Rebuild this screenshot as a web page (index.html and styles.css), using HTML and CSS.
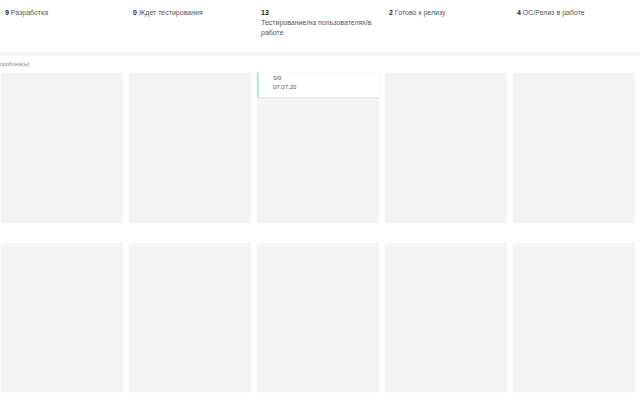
FILE: index.html
```html
<!DOCTYPE html>
<html lang="ru">
<head>
<meta charset="utf-8">
<link rel="stylesheet" href="styles.css">
</head>
<body>
<div class="board">
  <div class="head">
    <div class="hcol"><b>9</b> Разработка</div>
    <div class="hcol"><b>0</b> Ждет тестирования</div>
    <div class="hcol"><b>13</b><br>Тестирование/на пользователях/в работе</div>
    <div class="hcol"><b>2</b> Готово к релизу</div>
    <div class="hcol"><b>4</b> ОС/Релиз в работе</div>
  </div>
  <div class="band"></div>
  <div class="label">проблем(ы)</div>
  <div class="rows">
    <div class="row">
      <div class="cell"></div>
      <div class="cell"></div>
      <div class="cell">
        <div class="card">
          <div>3/0</div>
          <div>07.07.20</div>
        </div>
      </div>
      <div class="cell"></div>
      <div class="cell"></div>
    </div>
    <div class="row">
      <div class="cell"></div>
      <div class="cell"></div>
      <div class="cell"></div>
      <div class="cell"></div>
      <div class="cell"></div>
    </div>
  </div>
</div>
</body>
</html>
```
FILE: styles.css
```css
html, body {
  margin: 0;
  padding: 0;
  background: #ffffff;
}
body {
  font-family: "Liberation Sans", Arial, sans-serif;
  color: #333;
  width: 640px;
  height: 400px;
  overflow: hidden;
}
.head {
  display: grid;
  grid-template-columns: repeat(5, 128px);
  height: 52px;
  box-sizing: border-box;
  padding-top: 8px;
}
.hcol {
  padding-left: 5px;
  padding-right: 8px;
  font-size: 7px;
  line-height: 10px;
  color: #555;
}
.hcol b {
  color: #222;
}
.band {
  height: 4px;
  background: #f4f4f4;
}
.label {
  height: 17px;
  box-sizing: border-box;
  padding-top: 5px;
  font-size: 5.5px;
  line-height: 7px;
  color: #888;
}
.rows {
  display: flex;
  flex-direction: column;
  gap: 20px;
}
.row {
  display: flex;
  gap: 6px;
  padding-left: 1px;
  height: 150px;
}
.row + .row {
  height: 149px;
}
.cell {
  width: 122px;
  background: #f4f4f4;
  box-shadow: 0 0 2px rgba(0,0,0,0.04);
}
.card {
  background: #fff;
  border-left: 2px solid #b9e8d8;
  height: 24px;
  box-sizing: border-box;
  padding: 1px 0 0 14px;
  font-size: 6px;
  line-height: 9px;
  color: #555;
  box-shadow: 0 1px 2px rgba(0,0,0,0.08);
}
```
